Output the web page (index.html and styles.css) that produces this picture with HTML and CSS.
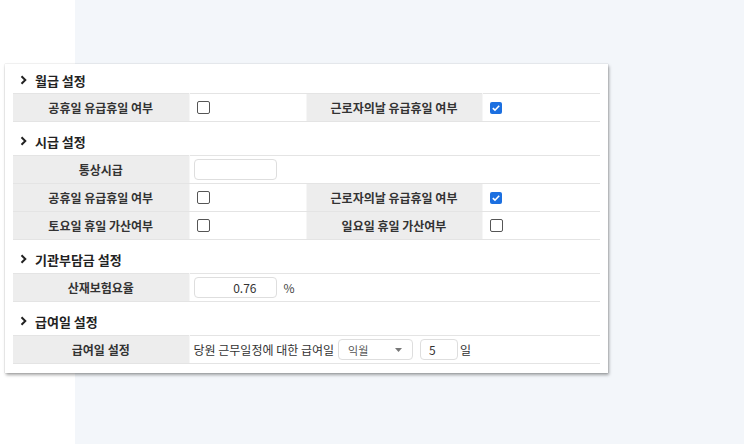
FILE: index.html
```html
<!DOCTYPE html>
<html>

<head>
  <meta charset="utf-8">
  <link rel="stylesheet" href="styles.css">
</head>

<body>
  <div class="card">
<!-- 월급 설정 -->
    <div class="section-title first">
      <svg class="chevron" width="7" height="10" viewBox="0 0 7 10"><path d="M1.5 1.2 L5.3 5 L1.5 8.8" fill="none" stroke="#222" stroke-width="2"/></svg>
      월급 설정
    </div>
    <table class="grid">
      <colgroup><col class="c-label"><col class="c-value"><col class="c-label"><col></colgroup>
      <tr>
        <th>공휴일 유급휴일 여부</th>
        <td><span class="check"></span></td>
        <th>근로자의날 유급휴일 여부</th>
        <td><span class="check on"><svg width="12" height="12" viewBox="0 0 12 12"><path d="M2.8 6.1 L5 8.2 L9.2 3.8" fill="none" stroke="#fff" stroke-width="1.6"/></svg></span></td>
      </tr>
    </table>
<!-- 시급 설정 -->
    <div class="section-title">
      <svg class="chevron" width="7" height="10" viewBox="0 0 7 10"><path d="M1.5 1.2 L5.3 5 L1.5 8.8" fill="none" stroke="#222" stroke-width="2"/></svg>
      시급 설정
    </div>
    <table class="grid">
      <colgroup><col class="c-label"><col class="c-value"><col class="c-label"><col></colgroup>
      <tr>
        <th>통상시급</th>
        <td colspan="3"><input type="text" class="field"></td>
      </tr>
      <tr>
        <th>공휴일 유급휴일 여부</th>
        <td><span class="check"></span></td>
        <th>근로자의날 유급휴일 여부</th>
        <td><span class="check on"><svg width="12" height="12" viewBox="0 0 12 12"><path d="M2.8 6.1 L5 8.2 L9.2 3.8" fill="none" stroke="#fff" stroke-width="1.6"/></svg></span></td>
      </tr>
      <tr>
        <th>토요일 휴일 가산여부</th>
        <td><span class="check"></span></td>
        <th>일요일 휴일 가산여부</th>
        <td><span class="check"></span></td>
      </tr>
    </table>
<!-- 기관부담금 설정 -->
    <div class="section-title">
      <svg class="chevron" width="7" height="10" viewBox="0 0 7 10"><path d="M1.5 1.2 L5.3 5 L1.5 8.8" fill="none" stroke="#222" stroke-width="2"/></svg>
      기관부담금 설정
    </div>
    <table class="grid">
      <colgroup><col class="c-label"><col class="c-value"><col class="c-label"><col></colgroup>
      <tr>
        <th>산재보험요율</th>
        <td colspan="3"><input type="text" class="field rate" value="0.76"><span class="unit">%</span></td>
      </tr>
    </table>
<!-- 급여일 설정 -->
    <div class="section-title">
      <svg class="chevron" width="7" height="10" viewBox="0 0 7 10"><path d="M1.5 1.2 L5.3 5 L1.5 8.8" fill="none" stroke="#222" stroke-width="2"/></svg>
      급여일 설정
    </div>
    <table class="grid">
      <colgroup><col class="c-label"><col class="c-value"><col class="c-label"><col></colgroup>
      <tr>
        <th>급여일 설정</th>
        <td colspan="3">
          <div class="payday">
            <span>당원 근무일정에 대한 급여일</span>
            <div class="select">
              <span>익월</span>
              <svg width="7" height="4" viewBox="0 0 7 4"><path d="M0 0 L7 0 L3.5 4 Z" fill="#777"/></svg>
            </div>
            <input type="text" class="field day" value="5">
            <span>일</span>
          </div>
        </td>
      </tr>
    </table>
  </div>
</body>

</html>
```

FILE: styles.css
```css
body {
  margin: 0;
  height: 444px;
  background: linear-gradient(to right, #ffffff 75px, #f3f6fa 75px);
  font-family: "Noto Sans CJK KR", "Noto Sans", sans-serif;
  color: #333;
  overflow: hidden;
}

.card {
  margin: 64px 0 0 5px;
  width: 587px;
  padding: 0 8px 9px 8px;
  background-color: #fff;
  box-shadow: 1px 2px 3px rgba(0, 0, 0, 0.35), 0 0 1px rgba(0, 0, 0, 0.25);
}

.section-title {
  display: flex;
  align-items: center;
  gap: 8px;
  height: 33px;
  padding: 5px 0 0 7px;
  box-sizing: border-box;
  font-size: 13px;
  font-weight: bold;
  color: #222;
}

.section-title.first {
  height: 29px;
  padding-top: 3px;
}

.chevron {
  display: block;
}

.grid {
  width: 100%;
  border-collapse: collapse;
  table-layout: fixed;
}

.c-label {
  width: 176px;
}

.c-value {
  width: 117px;
}

.grid th,
.grid td {
  height: 27px;
  padding: 0;
  border-top: 1px solid #e4e4e4;
  border-bottom: 1px solid #e4e4e4;
  font-size: 12px;
  white-space: nowrap;
}

.grid th {
  background-color: #ededed;
  font-weight: 600;
  color: #333;
  text-align: center;
  border-right: 1px solid #f6f6f6;
}

.grid th + td + th {
  border-left: 1px solid #f6f6f6;
}

.grid td {
  padding-left: 4px;
  background-color: #fff;
}

.check {
  display: block;
  width: 11px;
  height: 11px;
  margin-left: 3px;
  border: 1px solid #555;
  border-radius: 2px;
}

.check.on {
  width: 12px;
  height: 12px;
  border: none;
  background-color: #1b6fe0;
}

.check svg {
  display: block;
}

.field {
  width: 83px;
  height: 21px;
  box-sizing: border-box;
  border: 1px solid #dedede;
  border-radius: 4px;
  font-family: inherit;
  font-size: 12px;
  color: #333;
  vertical-align: middle;
  padding: 0 8px;
}

.field.rate {
  text-align: right;
  padding-right: 19px;
}

.unit {
  margin-left: 7px;
  color: #444;
  vertical-align: middle;
}

.payday {
  display: flex;
  align-items: center;
  font-size: 12px;
  color: #333;
}

.select {
  display: flex;
  align-items: center;
  justify-content: space-between;
  width: 75px;
  height: 21px;
  box-sizing: border-box;
  margin-left: 4px;
  padding: 0 10px 0 9px;
  border: 1px solid #dedede;
  border-radius: 4px;
  font-size: 11px;
  color: #555;
}

.field.day {
  width: 38px;
  margin-left: 7px;
  margin-right: 2px;
}
```
